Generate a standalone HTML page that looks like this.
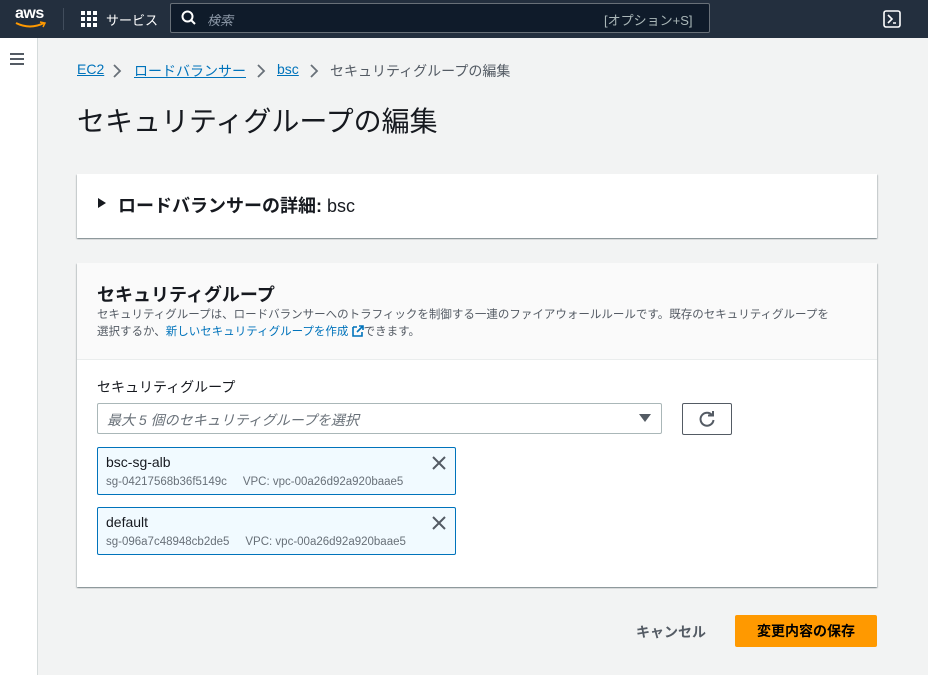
<!DOCTYPE html>
<html><head><meta charset="utf-8"><style>
*{box-sizing:border-box;margin:0;padding:0}
body{width:928px;height:675px;overflow:hidden;background:#f2f3f3;font-family:"Liberation Sans","Noto Sans CJK JP",sans-serif;color:#16191f;position:relative}
.top{position:absolute;left:0;top:0;width:928px;height:38px;background:#232f3e}
.abs{position:absolute}
.side{position:absolute;left:0;top:38px;width:38px;height:637px;background:#fff;border-right:1px solid #d5dbdb}
a{color:#0073bb;text-decoration:underline}
.card{position:absolute;left:77px;background:#fff;width:800px;box-shadow:0 1px 1px 0 rgba(0,28,36,.3),1px 1px 1px 0 rgba(0,28,36,.15),-1px 1px 1px 0 rgba(0,28,36,.15)}
.tok{position:absolute;left:97px;width:359px;height:48px;background:#f1faff;border:1px solid #0073bb;border-radius:2px}
.tok b{position:absolute;left:8px;top:6px;font-size:14px;font-weight:normal;color:#16191f}
.tok span{position:absolute;left:8px;top:28px;font-size:11.5px;color:#687078;white-space:pre}
.x{position:absolute;right:8px;top:7px}
.bc{position:absolute;top:61px;font-size:14px;white-space:nowrap}
</style></head><body>
<div class="top">
<div class="abs" style="left:15px;top:5px;color:#fff;font-size:16px;font-weight:bold;letter-spacing:-0.5px">aws</div>
<svg class="abs" style="left:14px;top:20px" width="34" height="10"><path d="M2 3 Q16 10 30 3" stroke="#ff9900" stroke-width="2" fill="none"/><path d="M26 2 L31 3 L29 7" stroke="#ff9900" stroke-width="1.5" fill="none"/></svg>
<div class="abs" style="left:63px;top:8px;width:1px;height:22px;background:#414d5c"></div>
<svg class="abs" style="left:81px;top:11px" width="16" height="16" fill="#fff"><rect x="0" y="0" width="4" height="4"/><rect x="6" y="0" width="4" height="4"/><rect x="12" y="0" width="4" height="4"/><rect x="0" y="6" width="4" height="4"/><rect x="6" y="6" width="4" height="4"/><rect x="12" y="6" width="4" height="4"/><rect x="0" y="12" width="4" height="4"/><rect x="6" y="12" width="4" height="4"/><rect x="12" y="12" width="4" height="4"/></svg>
<div class="abs" style="left:106px;top:10px;color:#fff;font-size:13px">サービス</div>
<div class="abs" style="left:170px;top:3px;width:540px;height:30px;border:1px solid #687078;border-radius:2px;background:#0f1b2a"></div>
<svg class="abs" style="left:181px;top:10px" width="16" height="16"><circle cx="6.5" cy="6.5" r="5" stroke="#fff" stroke-width="2" fill="none"/><path d="M10 10 L14 14" stroke="#fff" stroke-width="2"/></svg>
<div class="abs" style="left:207px;top:10px;color:#8d99a8;font-size:13px;font-style:italic">検索</div>
<div class="abs" style="left:604px;top:10px;color:#aab7b8;font-size:13px">[オプション+S]</div>
<svg class="abs" style="left:883px;top:10px" width="18" height="18"><rect x="1" y="1" width="16" height="16" rx="2" stroke="#fff" stroke-width="1.6" fill="none"/><path d="M5 5 L9 9 L5 13 M10 13 H13" stroke="#fff" stroke-width="1.6" fill="none"/></svg>
</div>
<div class="side"><svg class="abs" style="left:10px;top:15px" width="14" height="12"><path d="M0 1H14M0 6H14M0 11H14" stroke="#545b64" stroke-width="2"/></svg></div>
<div class="bc" style="left:77px"><a>EC2</a></div>
<div class="bc" style="left:134px"><a>ロードバランサー</a></div>
<div class="bc" style="left:277px"><a>bsc</a></div>
<div class="bc" style="left:330px;color:#545b64">セキュリティグループの編集</div>
<svg class="abs" style="left:112px;top:64px" width="10" height="14"><path d="M2 1 L8 7 L2 13" stroke="#687078" stroke-width="1.8" fill="none"/></svg>
<svg class="abs" style="left:256px;top:64px" width="10" height="14"><path d="M2 1 L8 7 L2 13" stroke="#687078" stroke-width="1.8" fill="none"/></svg>
<svg class="abs" style="left:309px;top:64px" width="10" height="14"><path d="M2 1 L8 7 L2 13" stroke="#687078" stroke-width="1.8" fill="none"/></svg>
<div class="abs" style="left:77px;top:100px;font-size:28px;color:#16191f">セキュリティグループの編集</div>
<div class="card" style="top:174px;height:64px">
<svg class="abs" style="left:21px;top:24px" width="8" height="10"><path d="M0 0 L8 5 L0 10Z" fill="#16191f"/></svg>
<div class="abs" style="left:41px;top:18px;font-size:18px;font-weight:bold">ロードバランサーの詳細: <span style="font-weight:normal">bsc</span></div>
</div>
<div class="card" style="top:263px;height:324px">
<div style="height:97px;border-bottom:1px solid #eaeded;background:#fafafa"></div>
<div class="abs" style="left:20px;top:18px;font-size:18px;font-weight:bold">セキュリティグループ</div>
<div class="abs" style="left:20px;top:44px;font-size:11.5px;color:#545b64;line-height:17px;width:760px">セキュリティグループは、ロードバランサーへのトラフィックを制御する一連のファイアウォールルールです。既存のセキュリティグループを<br>選択するか、<a style="text-decoration:none">新しいセキュリティグループを作成</a> <svg width="12" height="12" style="vertical-align:-2px"><path d="M1 2H5M1 2V11H10V7M7 1H11V5M11 1L5 7" stroke="#0073bb" stroke-width="1.6" fill="none"/></svg>できます。</div>
<div class="abs" style="left:20px;top:114px;font-size:14px">セキュリティグループ</div>
</div>
<div class="abs" style="left:97px;top:403px;width:565px;height:31px;background:#fff;border:1px solid #aab7b8;border-radius:2px"></div>
<div class="abs" style="left:107px;top:410px;font-size:14px;color:#687078;font-style:italic">最大 5 個のセキュリティグループを選択</div>
<svg class="abs" style="left:639px;top:414px" width="12" height="8"><path d="M0 0H12L6 8Z" fill="#545b64"/></svg>
<div class="abs" style="left:682px;top:403px;width:50px;height:32px;background:#fff;border:1px solid #545b64;border-radius:2px"></div>
<svg class="abs" style="left:698px;top:410px" width="18" height="18"><path d="M14 5 A6.5 6.5 0 1 0 15.5 10" stroke="#545b64" stroke-width="2" fill="none"/><path d="M10 3.5H15V-1" stroke="#545b64" stroke-width="2" fill="none" transform="translate(0,2)"/></svg>
<div class="tok" style="top:447px"><b>bsc-sg-alb</b><span>sg-04217568b36f5149c     VPC: vpc-00a26d92a920baae5</span><svg class="x" width="16" height="16"><path d="M2 2L14 14M14 2L2 14" stroke="#545b64" stroke-width="2"/></svg></div>
<div class="tok" style="top:507px"><b>default</b><span>sg-096a7c48948cb2de5     VPC: vpc-00a26d92a920baae5</span><svg class="x" width="16" height="16"><path d="M2 2L14 14M14 2L2 14" stroke="#545b64" stroke-width="2"/></svg></div>
<div class="abs" style="left:636px;top:622px;font-size:14px;font-weight:bold;color:#545b64">キャンセル</div>
<div class="abs" style="left:735px;top:615px;width:142px;height:32px;border-radius:2px;color:#000;font-size:14px;font-weight:bold;text-align:center;line-height:32px;background:#ff9900">変更内容の保存</div>
</body></html>
